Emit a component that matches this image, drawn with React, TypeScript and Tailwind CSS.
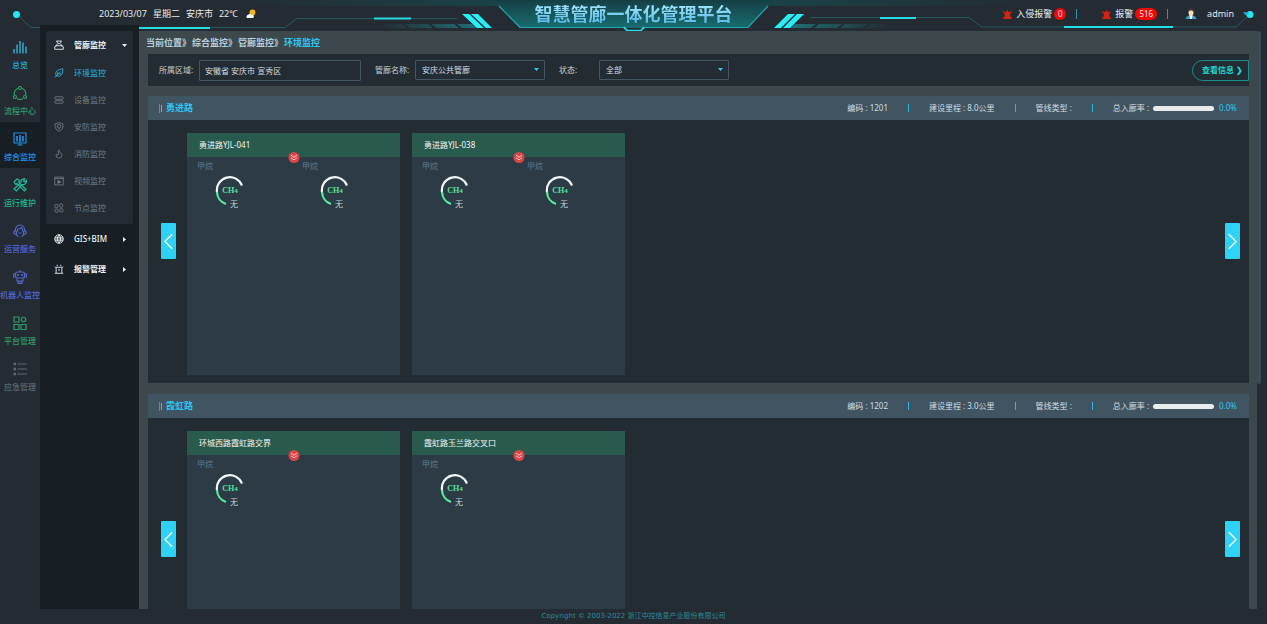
import React, { useState } from 'react';
import { Flame } from 'lucide-react';

interface NavItem {
  label: string;
  color: string;
  icon: React.ReactNode;
}

interface Station {
  name: string;
  gases: string[];
}

interface Road {
  name: string;
  code: string;
  length: string;
  rate: number;
  stations: Station[];
}

const Icon: React.FC<{ size?: string; children: React.ReactNode }> = ({ size = 'size-[14px]', children }) => (
  <svg viewBox="0 0 28 28" className={`${size} shrink-0`} fill="none" stroke="currentColor" strokeWidth="2.4" aria-hidden="true">
    {children}
  </svg>
);

const navItems: NavItem[] = [
  {
    label: '总览',
    color: 'text-[#2aa9cb]',
    icon: (
      <Icon>
        <path d="M2 27V18M8 27V9M14 27V2M20 27V5M26 27V13" strokeWidth="3" />
      </Icon>
    ),
  },
  {
    label: '流程中心',
    color: 'text-[#2f9b68]',
    icon: (
      <Icon>
        <path d="M10 4.500A11 11 0 0 0 3 18M18 4.500A11 11 0 0 1 25 18M8 25A11 11 0 0 0 20 25" />
        <circle cx="14" cy="4" r="3" />
        <circle cx="4" cy="22" r="3" />
        <circle cx="24" cy="22" r="3" />
      </Icon>
    ),
  },
  {
    label: '综合监控',
    color: 'text-[#1c8ee0]',
    icon: (
      <Icon>
        <path d="M2 2H26V22H2ZM9 26H19M14 22V26" />
        <path d="M8 19V8M14 21V6M20 19V8" strokeWidth="3.4" />
      </Icon>
    ),
  },
  {
    label: '运行维护',
    color: 'text-[#1fb99c]',
    icon: (
      <Icon>
        <path d="M2 8L8 2L14 5L11 8L26 23L23 26L8 11L6 13Z" />
        <path d="M16 10V6Q18 1 24 2L21 6L23 8L27 5Q28 11 22 13H18L7 26L2 22L14 11" />
      </Icon>
    ),
  },
  {
    label: '运营服务',
    color: 'text-[#5365cf]',
    icon: (
      <Icon>
        <path d="M5 15V11A9 9 0 0 1 23 11V15M9 15V11Q14 9 17 7L19 11V15" />
        <path d="M5 12L2 15V19L7 22V14M23 12L26 15V19L21 22V14M7 21L11 26M21 21L17 26M11 18H17" />
      </Icon>
    ),
  },
  {
    label: '机器人监控',
    color: 'text-[#5365cf]',
    icon: (
      <Icon>
        <rect x="5" y="4" width="18" height="12" rx="4" />
        <path d="M14 0V4M5 8H1V14H5M23 8H27V14H23M8 17V22H20V17M10 22V27H18V22M14 22V27" />
        <path d="M10 8V12M18 8V12" strokeWidth="3.4" />
      </Icon>
    ),
  },
  {
    label: '平台管理',
    color: 'text-[#2f9b68]',
    icon: (
      <Icon>
        <path d="M2 2H12V12H2ZM2 17H12V27H2ZM16 17H26V27H16Z" />
        <circle cx="21" cy="7" r="4.500" />
      </Icon>
    ),
  },
  {
    label: '应急管理',
    color: 'text-[#5c6973]',
    icon: (
      <Icon>
        <path d="M9 4H28M9 14H28M9 24H28" />
        <path d="M1 4H6M1 14H6M1 24H6" strokeWidth="5" />
      </Icon>
    ),
  },
];

const menuItems: { label: string; icon: React.ReactNode }[] = [
  {
    label: '环境监控',
    icon: (
      <Icon size="size-[10px]">
        <path d="M6 22Q2 10 12 6Q18 3 25 2Q25 12 22 18Q17 25 6 22ZM2 27L18 10M10 19V12M13 16H20" />
      </Icon>
    ),
  },
  {
    label: '设备监控',
    icon: (
      <Icon size="size-[10px]">
        <rect x="2" y="5" width="24" height="7" rx="3" />
        <rect x="2" y="16" width="24" height="7" rx="3" />
      </Icon>
    ),
  },
  {
    label: '安防监控',
    icon: (
      <Icon size="size-[10px]">
        <path d="M14 2L25 5V14Q24 22 14 26Q4 22 3 14V5Z" />
        <circle cx="14" cy="12" r="5" />
        <path d="M14 17V21" />
      </Icon>
    ),
  },
  { label: '消防监控', icon: <Flame className="size-[10px]" /> },
  {
    label: '视频监控',
    icon: (
      <Icon size="size-[10px]">
        <path d="M2 3H26V25H2ZM2 7H26" />
        <path d="M11 12L19 16.500L11 21Z" fill="currentColor" />
      </Icon>
    ),
  },
  {
    label: '节点监控',
    icon: (
      <Icon size="size-[10px]">
        <rect x="2" y="4" width="9" height="9" rx="3" />
        <rect x="3" y="17" width="9" height="9" rx="3" />
        <rect x="16" y="16" width="9" height="9" rx="3" />
        <circle cx="20" cy="7" r="5" />
      </Icon>
    ),
  },
];

const roads: Road[] = [
  {
    name: '勇进路',
    code: '1201',
    length: '8.0公里',
    rate: 0,
    stations: [
      { name: '勇进路YJL-041', gases: ['甲烷', '甲烷'] },
      { name: '勇进路YJL-038', gases: ['甲烷', '甲烷'] },
    ],
  },
  {
    name: '霞虹路',
    code: '1202',
    length: '3.0公里',
    rate: 0,
    stations: [
      { name: '环城西路霞虹路交界', gases: ['甲烷'] },
      { name: '霞虹路玉兰路交叉口', gases: ['甲烷'] },
    ],
  },
];

const HeaderFrame: React.FC = () => (
  <svg
    viewBox="0 0 1267 32"
    preserveAspectRatio="none"
    className="pointer-events-none absolute inset-x-0 top-0 h-8 w-full"
    fill="none"
    aria-hidden="true"
  >
    <defs>
      <linearGradient id="band" x1="0" x2="1" y1="0" y2="0">
        <stop offset="0" stopColor="#17474c" stopOpacity="0" />
        <stop offset="0.4" stopColor="#17474c" />
        <stop offset="0.6" stopColor="#17474c" />
        <stop offset="1" stopColor="#17474c" stopOpacity="0" />
      </linearGradient>
      <linearGradient id="plate" x1="0" x2="0" y1="0" y2="1">
        <stop offset="0" stopColor="#163f45" />
        <stop offset="1" stopColor="#176d70" />
      </linearGradient>
      <linearGradient id="fadeL" x1="380" x2="478" y1="0" y2="0" gradientUnits="userSpaceOnUse">
        <stop offset="0" stopColor="#1f6f76" stopOpacity="0" />
        <stop offset="1" stopColor="#1f6f76" />
      </linearGradient>
      <linearGradient id="fadeR" x1="890" x2="790" y1="0" y2="0" gradientUnits="userSpaceOnUse">
        <stop offset="0" stopColor="#1f6f76" stopOpacity="0" />
        <stop offset="1" stopColor="#1f6f76" />
      </linearGradient>
    </defs>
    <rect x="230" width="810" height="6" fill="url(#band)" />
    <path d="M493 0H774L768 6L748 28H520L499 6Z" fill="url(#plate)" />
    <path d="M499 6L520 27.500H623L627 30M641 30L645 27.500H748L768 6" stroke="#1fa9ae" strokeWidth="1.200" />
    <path d="M624 27L627 30.500H641L644 27" stroke="#22e0ea" strokeWidth="1.600" />

    <path d="M17 15L31 27.500H285L297 18.500H457" stroke="#23595f" />
    <path d="M810 17.500H969L982 27H1236L1250 14" stroke="#23595f" />
    <path d="M139 28H210M374 18.500H411M880 18H916M1064 27H1173" stroke="#27dbe2" strokeWidth="2" />

    <path d="M379 24H402L407 28H384ZM405 24H428L433 28H410ZM431 24H454L459 28H436ZM457 24H472L477 28H462Z" fill="url(#fadeL)" />
    <path d="M795 24H816L811 28H790ZM819 24H842L837 28H814ZM845 24H868L863 28H840ZM871 24H894L889 28H866Z" fill="url(#fadeR)" />
    <path d="M462 14H469L484 28H477ZM471 14H478L492 28H486Z" fill="#25f0f7" />
    <path d="M788 14H795L781 28H774ZM797 14H804L790 28H783Z" fill="#25f0f7" />

    <circle cx="16.500" cy="14.500" r="3.500" fill="#25e6f2" />
    <circle cx="1250" cy="14.500" r="3.500" fill="#25e6f2" />
  </svg>
);

const AlarmLight: React.FC = () => (
  <svg viewBox="0 0 20 20" className="mr-1 size-[9px] shrink-0" fill="#d6220f" aria-hidden="true">
    <path d="M4 15V9A6 6 0 0 1 16 9V15ZM1 15H19V20H1ZM9 0H11V4H9ZM0 4L2 2L5 6L3 8ZM20 4L18 2L15 6L17 8Z" />
  </svg>
);

const Caret: React.FC<{ className: string }> = ({ className }) => (
  <svg viewBox="0 0 10 6" className={className} fill="currentColor" aria-hidden="true">
    <path d="M0 0H10L5 6Z" />
  </svg>
);

const Header: React.FC = () => (
  <header className="grid h-[25px] shrink-0 grid-cols-[1fr_auto_1fr] items-center pt-[3px] text-[9px] leading-3 text-[#e3eaee]">
    <HeaderFrame />
    <div className="relative flex items-center gap-[6px] pl-[99px] whitespace-nowrap">
      <span>2023/03/07</span>
      <span>星期二</span>
      <span>安庆市</span>
      <span>22℃</span>
      <svg viewBox="0 0 20 20" className="ml-[2px] size-[10px]" aria-hidden="true">
        <circle cx="13" cy="7" r="6" fill="#f8b21c" />
        <path d="M2 18A3.500 3.500 0 0 1 4 12A4 4 0 0 1 11 12A3 3 0 0 1 14 18Z" fill="#fff" />
      </svg>
    </div>
    <h1 className="relative bg-gradient-to-b from-[#a5eaff] to-[#4fb5e6] bg-clip-text text-[18px] leading-[22px] font-bold text-transparent">
      智慧管廊一体化管理平台
    </h1>
    <div className="relative flex items-center justify-end pr-[18px] whitespace-nowrap">
      <AlarmLight />
      <span>入侵报警</span>
      <span className="ml-[2px] flex h-3 min-w-3 items-center justify-center rounded-full bg-[#f50505] text-[8px]">0</span>
      <span className="mr-[25px] ml-[10px] h-[10px] w-px bg-[#2497bb]" />
      <AlarmLight />
      <span>报警</span>
      <span className="ml-[2px] flex h-3 items-center justify-center rounded-full bg-[#f50505] px-1 text-[8px]">516</span>
      <span className="mr-[17px] ml-[10px] h-[10px] w-px bg-[#2497bb]" />
      <svg viewBox="0 0 24 24" className="mr-[10px] size-3" aria-hidden="true">
        <path d="M1 22Q2 16 9 15H15Q22 16 23 22Z" fill="#3a9bd8" />
        <path d="M9 14H15L14 22H10Z" fill="#fff" />
        <ellipse cx="12" cy="9" rx="5" ry="6.500" fill="#f7dcc0" />
        <path d="M6.500 8Q6 1 12 1Q18 1 17.500 8Q15 4 12 5Q9 4 6.500 8Z" fill="#4b3a33" />
      </svg>
      <span>admin</span>
      <Caret className="ml-[9px] h-1 w-[6px] text-[#2ba6d6]" />
    </div>
  </header>
);

const Gauge: React.FC<{ gas: string }> = ({ gas }) => (
  <div className="pl-[10px]">
    <p className="text-[8px] leading-[10px] text-[#5c7c93]">{gas}</p>
    <div className="relative mt-[5px] ml-[18px] size-[30px]">
      <svg viewBox="0 0 30 30" className="size-[30px]" fill="none" strokeWidth="2.2" aria-hidden="true">
        <path d="M27 9.500A13 13 0 0 0 2 16" stroke="#f3f7f8" />
        <path d="M2 16A13 13 0 0 0 11 28" stroke="#55eda0" />
      </svg>
      <span className="absolute inset-0 flex items-baseline justify-center pt-[10px] font-['Liberation_Serif',serif] text-[8px] leading-[10px] font-bold text-[#55e39b]">
        CH<span className="text-[7px]">4</span>
      </span>
      <span className="absolute right-[7px] -bottom-[3px] text-[8px] leading-[10px] text-[#c3d3dc]">无</span>
    </div>
  </div>
);

const StationCard: React.FC<{ station: Station }> = ({ station }) => (
  <article className="h-[242px] w-[213px] shrink-0 bg-[#2c3b45]">
    <div className="relative flex h-6 items-center bg-[#295a4e] px-3">
      <h3 className="text-[8px] text-[#f0f5f4]">{station.name}</h3>
      <button
        type="button"
        aria-label="展开"
        className="absolute -bottom-[6px] left-1/2 flex size-[11px] -translate-x-1/2 items-center justify-center rounded-full bg-[#dc4545] text-[#ffd9d9]"
      >
        <svg viewBox="0 0 12 12" className="size-[7px]" fill="none" stroke="currentColor" strokeWidth="1.500" aria-hidden="true">
          <path d="M1 2L6 5.500L11 2M1 6.500L6 10L11 6.500" />
        </svg>
      </button>
    </div>
    <div className="grid grid-cols-[105px_1fr] pt-1">
      {station.gases.map((gas, index) => (
        <Gauge key={index} gas={gas} />
      ))}
    </div>
  </article>
);

const ArrowButton: React.FC<{ direction: 'left' | 'right' }> = ({ direction }) => (
  <button
    type="button"
    aria-label={direction === 'left' ? '上一页' : '下一页'}
    className="mt-[90px] flex h-9 w-[15px] shrink-0 items-center justify-center rounded-[1px] bg-[#2fd2f7] text-white"
  >
    <svg viewBox="0 0 10 18" className="h-[17px] w-[9px]" fill="none" stroke="currentColor" strokeWidth="1.500" aria-hidden="true">
      <path d={direction === 'left' ? 'M9 1L1 9L9 17' : 'M1 1L9 9L1 17'} />
    </svg>
  </button>
);

const Divider: React.FC = () => <span className="h-2 w-px bg-[#2bb7dd]" />;

const RoadSection: React.FC<{ road: Road }> = ({ road }) => (
  <section className="shrink-0 bg-[#242c33]">
    <div className="flex h-6 items-center bg-[#405462] pr-3 pl-[11px]">
      <span className="h-[9px] w-px bg-[#1fa0e0]" />
      <span className="ml-px h-[7px] w-px bg-[#d8922e]" />
      <h2 className="ml-1 text-[9px] font-bold text-[#2bc8ef]">{road.name}</h2>
      <div className="ml-auto flex items-center gap-5 text-[8px] whitespace-nowrap text-[#d3dde3]">
        <span>编码 : {road.code}</span>
        <Divider />
        <span>建设里程 : {road.length}</span>
        <Divider />
        <span>管线类型 :</span>
        <Divider />
        <span className="flex items-center">
          总入廊率 :
          <span className="mr-[5px] ml-1 h-[5px] w-[61px] overflow-hidden rounded-full bg-[#e9ebec]">
            <span className="block h-full bg-[#2bc8ef]" style={{ width: `${road.rate}%` }} />
          </span>
          <span className="text-[#2bc8ef]">{road.rate.toFixed(1)}%</span>
        </span>
      </div>
    </div>
    <div className="flex items-start px-[9px] pt-[13px] pb-2 pl-[13px]">
      <ArrowButton direction="left" />
      <div className="mx-[11px] flex min-w-0 flex-1 gap-3 overflow-hidden">
        {road.stations.map((station) => (
          <StationCard key={station.name} station={station} />
        ))}
      </div>
      <ArrowButton direction="right" />
    </div>
  </section>
);

const FilterSelect: React.FC<{ id: string; options: string[] }> = ({ id, options }) => (
  <div className="relative">
    <select
      id={id}
      className="block h-5 w-[130px] appearance-none rounded-[1px] border border-[#435663] bg-transparent px-[6px] text-[8px] text-[#d3dde3]"
    >
      {options.map((option) => (
        <option key={option}>{option}</option>
      ))}
    </select>
    <Caret className="pointer-events-none absolute top-2 right-[6px] h-[3px] w-[5px] text-[#2bc8ef]" />
  </div>
);

const App: React.FC = () => {
  const [activeNav, setActiveNav] = useState('综合监控');
  const [activeMenu, setActiveMenu] = useState('环境监控');
  const [area, setArea] = useState('安徽省 安庆市 宣秀区');

  return (
    <div className="relative flex h-screen flex-col overflow-hidden bg-[#242b32] font-['Noto_Sans','Noto_Sans_CJK_SC',sans-serif]">
      <Header />

      <div className="relative flex min-h-0 flex-1">
        <nav className="w-10 shrink-0 pt-[5px]">
          {navItems.map((item) => (
            <button
              key={item.label}
              type="button"
              onClick={() => setActiveNav(item.label)}
              className={`flex h-[46px] w-full flex-col items-center gap-[5px] pt-[10px] text-[8px] leading-3 font-medium whitespace-nowrap ${item.color} ${
                activeNav === item.label ? 'bg-[#171e24]' : ''
              }`}
            >
              {item.icon}
              <span>{item.label}</span>
            </button>
          ))}
        </nav>

        <aside className="w-[99px] shrink-0 bg-[#171e24] px-[6px] pt-[6px] text-[8px] text-[#f0f3f5]">
          <div className="rounded-[2px] bg-[#242b32] pb-[3px]">
            <button type="button" className="flex h-7 w-full items-center pr-[6px] pl-2 font-bold">
              <Icon size="size-[10px]">
                <path d="M6 3H22M9 3V8L14 11L19 8V3M10 11L5 16H23L18 11M8 16L2 19V26H26V19L20 16" />
              </Icon>
              <span className="ml-[10px]">管廊监控</span>
              <Caret className="ml-auto h-[3px] w-[5px]" />
            </button>
            {menuItems.map((item) => (
              <button
                key={item.label}
                type="button"
                onClick={() => setActiveMenu(item.label)}
                className={`flex h-[27px] w-full items-center gap-[10px] px-2 ${
                  activeMenu === item.label ? 'text-[#2ab5d9]' : 'text-[#717b83]'
                }`}
              >
                {item.icon}
                <span>{item.label}</span>
              </button>
            ))}
          </div>
          <button type="button" className="flex h-[30px] w-full items-center pr-[6px] pl-2 font-medium">
            <Icon size="size-[10px]">
              <circle cx="14" cy="14" r="12" />
              <path d="M3 9H25M2 14H26M3 19H25M14 2Q5 14 14 26Q23 14 14 2" />
            </Icon>
            <span className="ml-[10px]">GIS+BIM</span>
            <Caret className="ml-auto h-[3px] w-[5px] -rotate-90" />
          </button>
          <button type="button" className="flex h-[30px] w-full items-center pr-[6px] pl-2 font-bold">
            <Icon size="size-[10px]">
              <path d="M2 26H26M6 26V9H22V26M14 13V20M9 6V2M19 6V2M2 8L5 10M26 8L23 10" />
            </Icon>
            <span className="ml-[10px]">报警管理</span>
            <Caret className="ml-auto h-[3px] w-[5px] -rotate-90" />
          </button>
        </aside>

        <main className="mt-[6px] flex min-w-0 flex-1 flex-col overflow-hidden bg-[#3d484c] pr-2 pl-[9px]">
          <div className="-ml-[2px] flex h-[23px] shrink-0 items-center text-[9px] font-bold text-[#b9cddb]">
            <span>当前位置</span>
            <span className="mr-px">》</span>
            <a href="#monitor">综合监控</a>
            <span className="mr-px">》</span>
            <a href="#corridor">管廊监控</a>
            <span className="mr-px">》</span>
            <span className="text-[#2bc8ef]">环境监控</span>
          </div>

          <form className="flex h-8 shrink-0 items-center bg-[#242c33] pl-[11px] text-[8px] whitespace-nowrap text-[#c3cfd6]">
            <label htmlFor="area" className="w-10">所属区域:</label>
            <input
              id="area"
              value={area}
              onChange={(e) => setArea(e.target.value)}
              className="h-[21px] w-[162px] rounded-[1px] border border-[#435663] bg-transparent px-[5px] text-[#d3dde3]"
            />
            <label htmlFor="corridor" className="ml-[14px] w-10">管廊名称:</label>
            <FilterSelect id="corridor" options={['安庆公共管廊']} />
            <label htmlFor="status" className="ml-[14px] w-10">状态:</label>
            <FilterSelect id="status" options={['全部', '正常', '报警']} />
            <button
              type="button"
              className="ml-auto flex h-[21px] w-[57px] items-center justify-center rounded-l-full border border-[#178f90] pl-1 text-[8px] font-bold text-[#1fd3cf]"
            >
              查看信息 ❯
            </button>
          </form>

          <div className="mt-[10px] flex flex-col gap-[11px]">
            {roads.map((road) => (
              <RoadSection key={road.code} road={road} />
            ))}
          </div>
        </main>

        <div className="mt-[6px] w-[10px] shrink-0">
          <div className="h-[61%] w-1 rounded-full bg-[#3a4a59]" />
        </div>
      </div>

      <footer className="h-[15px] shrink-0 text-center font-['DejaVu_Sans','Noto_Sans_CJK_SC',sans-serif] text-[7px] leading-[15px] text-[#2a8b9d]">
        Copyright © 2003-2022 浙江中控信息产业股份有限公司
      </footer>
    </div>
  );
};

export default App;
